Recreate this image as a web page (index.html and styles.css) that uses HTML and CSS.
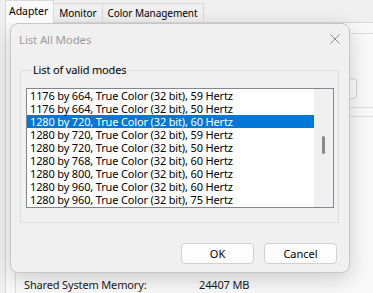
FILE: index.html
```html
<!DOCTYPE html>
<html lang="en">

<head>
    <meta charset="UTF-8">
    <meta name="viewport" content="width=device-width, initial-scale=1.0">
    <title>List All Modes</title>
    <link rel="stylesheet" href="styles.css">
</head>

<body>
    <div class="window">
        <div class="tabs">
            <div class="tab active">Adapter</div>
            <div class="tab">Monitor</div>
            <div class="tab">Color Management</div>
        </div>
        <div class="page">
            <div class="group adapter-type">
                <button class="props-btn">Properties</button>
            </div>
            <div class="group adapter-info">
                <div class="info-row"><span class="info-label">Chip Type:</span><span>Intel(R) Iris(R) Xe</span></div>
                <div class="info-row"><span class="info-label">DAC Type:</span><span>Internal</span></div>
                <div class="info-row"><span class="info-label">Adapter String:</span><span>Intel(R) Iris(R) Xe</span></div>
                <div class="info-row"><span class="info-label">Bios Information:</span><span>Intel Video BIOS</span></div>
                <div class="info-row"><span class="info-label">Total Available Graphics Memory:</span><span>24535 MB</span></div>
                <div class="info-row"><span class="info-label">Dedicated Video Memory:</span><span>128 MB</span></div>
                <div class="info-row"><span class="info-label">System Video Memory:</span><span>0 MB</span></div>
                <div class="info-row"><span class="info-label">Shared System Memory:</span><span>24407 MB</span></div>
            </div>
        </div>
    </div>

    <!-- modal dialog over the properties window -->
    <div class="dialog">
        <div class="titlebar">
            <span class="title">List All Modes</span>
            <svg class="close" width="10" height="10" viewBox="0 0 10 10">
                <path d="M0.5 0.5 L9.5 9.5 M9.5 0.5 L0.5 9.5" stroke="#8a8a8a" stroke-width="1" fill="none" />
            </svg>
        </div>
        <fieldset class="modes-group">
            <legend>List of valid modes</legend>
            <div class="listbox">
                <ul class="modes">
                    <li>1176 by 664, True Color (32 bit), 59 Hertz</li>
                    <li>1176 by 664, True Color (32 bit), 50 Hertz</li>
                    <li class="selected">1280 by 720, True Color (32 bit), 60 Hertz</li>
                    <li>1280 by 720, True Color (32 bit), 59 Hertz</li>
                    <li>1280 by 720, True Color (32 bit), 50 Hertz</li>
                    <li>1280 by 768, True Color (32 bit), 60 Hertz</li>
                    <li>1280 by 800, True Color (32 bit), 60 Hertz</li>
                    <li>1280 by 960, True Color (32 bit), 60 Hertz</li>
                    <li>1280 by 960, True Color (32 bit), 75 Hertz</li>
                </ul>
                <div class="scrollbar">
                    <div class="thumb"></div>
                </div>
            </div>
        </fieldset>
        <div class="buttons">
            <button class="btn">OK</button>
            <button class="btn">Cancel</button>
        </div>
    </div>
</body>

</html>
```

FILE: styles.css
```css
* {
    box-sizing: border-box;
    margin: 0;
    padding: 0;
}

body {
    font-family: "Segoe UI", "Noto Sans", sans-serif;
    font-size: 11px;
    letter-spacing: -0.15px;
    color: #1a1a1a;
    background-color: #f0f0f0;
    width: 373px;
    height: 293px;
    overflow: hidden;
    position: relative;
}

/* property sheet behind the dialog */
.window {
    width: 420px;
}

.tabs {
    display: flex;
    align-items: flex-end;
    height: 22px;
    padding-left: 5px;
    font-size: 10px;
    letter-spacing: -0.05px;
}

.tab {
    height: 19px;
    line-height: 19px;
    padding: 0 5px;
    border: 1px solid #d9d9d9;
    border-bottom: none;
    border-left: none;
    background-color: #f0f0f0;
    color: #000;
}

.tab.active {
    height: 23px;
    margin-bottom: -1px;
    line-height: 20px;
    padding: 0 5px 0 3px;
    border-left: 1px solid #d9d9d9;
    background-color: #f9f9f9;
    position: relative;
    z-index: 1;
    font-size: 10.5px;
}

.page {
    margin-left: 5px;
    border: 1px solid #d9d9d9;
    background-color: #f9f9f9;
    padding: 10px 9px 20px 9px;
}

.group {
    border: 1px solid #dcdcdc;
}

.adapter-type {
    height: 75px;
    display: flex;
    align-items: flex-end;
    justify-content: flex-end;
    padding: 0 52px 8px 0;
}

.props-btn {
    width: 75px;
    height: 21px;
    border: 1px solid #d0d0d0;
    border-radius: 4px;
    background-color: #fdfdfd;
    font: inherit;
}

.adapter-info {
    margin-top: 8px;
    padding: 18px 0 0 8px;
}

.info-row {
    display: flex;
    height: 20px;
    line-height: 20px;
}

.info-label {
    width: 175px;
}

/* dialog */
.dialog {
    position: absolute;
    left: 10px;
    top: 23px;
    width: 340px;
    height: 250px;
    background-color: #f0f0f0;
    border: 1px solid #c6c6c6;
    border-radius: 8px;
    box-shadow: 0 6px 22px rgba(0, 0, 0, 0.18);
    display: flex;
    flex-direction: column;
}

.titlebar {
    height: 30px;
    display: flex;
    align-items: center;
    justify-content: space-between;
    padding: 0 9px 0 8px;
}

.title {
    font-size: 11.5px;
    color: #9a9a9a;
}

.modes-group {
    margin: 9px 10px 0 9px;
    border: 1px solid #dcdcdc;
    padding: 11px 4px 14px 5px;
}

.modes-group legend {
    margin-left: 5px;
    padding: 0 2px;
    line-height: 14px;
    color: #000;
}

.listbox {
    display: flex;
    height: 120px;
    border: 1px solid #82878f;
    background-color: #fff;
}

.modes {
    list-style: none;
    flex: 1;
}

.modes li {
    height: 13px;
    line-height: 13px;
    padding-left: 3px;
    color: #000;
    white-space: nowrap;
}

.modes li.selected {
    background-color: #0078d7;
    color: #fff;
}

.scrollbar {
    width: 19px;
    background-color: #f0f0f0;
    padding: 47px 0 0 8px;
}

.thumb {
    width: 3px;
    height: 18px;
    border-radius: 2px;
    background-color: #8a8a8a;
}

.buttons {
    display: flex;
    justify-content: flex-end;
    gap: 10px;
    margin-top: 20px;
    padding-right: 12px;
}

.btn {
    width: 73px;
    height: 21px;
    border: 1px solid #d0d0d0;
    border-radius: 4px;
    background-color: #fdfdfd;
    font: inherit;
    color: #000;
}
```
